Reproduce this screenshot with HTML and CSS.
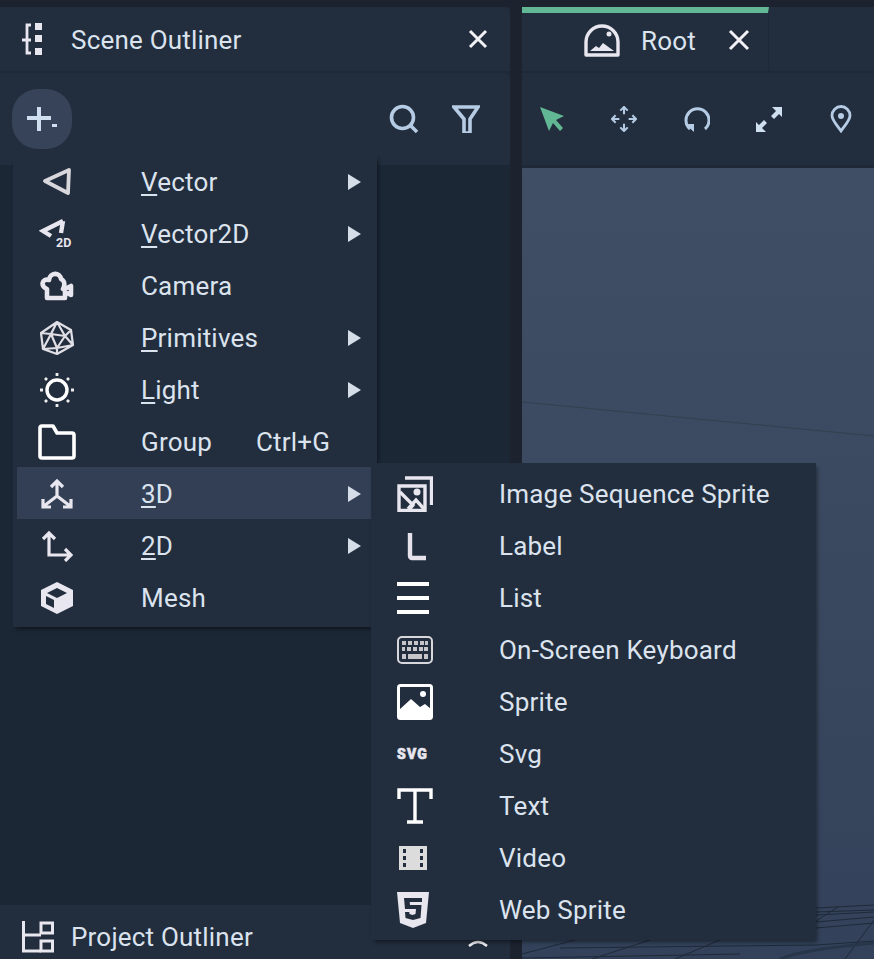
FILE: index.html
```html
<!DOCTYPE html>
<html>

<head>
    <title>Scene Outliner</title>
    <link rel="stylesheet" href="styles.css">
</head>

<body>
    <div class="app">
        <div class="left">
            <div class="tabbar">
                <svg class="tab-icon" width="20" height="32" viewBox="0 0 20 32">
                    <path d="M9 2H5v28h4M0 17h9" fill="none" stroke="#e8e6ee" stroke-width="2.800" />
                    <path d="M13 0h7v7h-7zM13 12h7v7h-7zM13 25h7v7h-7z" fill="#e8e6ee" />
                </svg>
                <span class="tab-title">Scene Outliner</span>
                <svg class="close close-left" width="20" height="20" viewBox="0 0 20 20">
                    <path d="M2 2l16 16M18 2L2 18" stroke="#f2f2f6" stroke-width="3" />
                </svg>
            </div>
            <div class="toolbar">
                <div class="add-btn">
                    <svg width="32" height="26" viewBox="0 0 32 26">
                        <path d="M13 1v24M1 12h24" stroke="#cfdff0" stroke-width="4" />
                        <path d="M26 18h5v3h-5z" fill="#cfdff0" />
                    </svg>
                </div>
                <svg class="tool-search" width="30" height="30" viewBox="0 0 30 30">
                    <circle cx="13.500" cy="13.500" r="11" fill="none" stroke="#b5cce4" stroke-width="3.600" />
                    <path d="M21 21l7 7" stroke="#b5cce4" stroke-width="3.600" />
                </svg>
                <svg class="tool-filter" width="28" height="28" viewBox="0 0 28 28">
                    <path d="M2 2h24L18 14v14h-6V14z" fill="none" stroke="#b5cce4" stroke-width="3.600" />
                </svg>
            </div>
            <div class="tree"></div>
            <div class="project-bar">
                <svg class="tab-icon" width="32" height="32" viewBox="0 0 32 32">
                    <path d="M1.500 0v30H19M1.500 14H19" fill="none" stroke="#e8e6ee" stroke-width="3" />
                    <path d="M19 2h11.500v10H19zM19 20h11.500v10H19z" fill="none" stroke="#e8e6ee" stroke-width="3" />
                </svg>
                <span class="tab-title tab-title-project">Project Outliner</span>
                <svg class="caret" width="20" height="8" viewBox="0 0 20 8">
                    <path d="M1 7q9-8 18 0" fill="none" stroke="#f2f2f6" stroke-width="2.400" />
                </svg>
            </div>
        </div>

        <div class="right">
            <div class="tabbar tabbar-right">
                <div class="root-tab">
                    <svg width="36" height="33" viewBox="0 0 36 33">
                        <path d="M2 31V18a16 16 0 0 1 32 0v13z" fill="none" stroke="#e8e6ee" stroke-width="3.400" stroke-linejoin="round" />
                        <circle cx="25" cy="10" r="2.500" fill="#e8e6ee" />
                        <path d="M6 27l6-5 3 2 4-5 11 8z" fill="#e8e6ee" />
                    </svg>
                    <span class="tab-title">Root</span>
                    <svg width="22" height="22" viewBox="0 0 22 22">
                        <path d="M2 2l18 18M20 2L2 20" stroke="#f2f2f6" stroke-width="3" />
                    </svg>
                </div>
            </div>
            <div class="toolbar toolbar-right">
                <svg width="26" height="26" viewBox="0 0 26 26">
                    <path d="M1 1l24 9-8 4 7 8-3 3-7-8-4 8z" fill="#62b894" />
                </svg>
                <svg width="26" height="26" viewBox="0 0 28 28">
                    <path d="M10 5l4-4 4 4M10 23l4 4 4-4M5 10l-4 4 4 4M23 10l4 4-4 4" fill="none" stroke="#b5cce4" stroke-width="2.200" />
                    <path d="M14 2v7M14 19v7M2 14h7M19 14h7" stroke="#b5cce4" stroke-width="2.200" />
                </svg>
                <svg width="26" height="26" viewBox="0 0 26 26">
                    <path d="M6 23a11.500 11.500 0 1 1 15 0" fill="none" stroke="#b5cce4" stroke-width="3" />
                    <path d="M1 18h9v8z" fill="#b5cce4" />
                </svg>
                <svg width="26" height="26" viewBox="0 0 26 26">
                    <path d="M16 1h10v10l-3-3-5 5-3-3 5-5zM0 16l3 3 5-5 3 3-5 5 4 4H0z" fill="#cfdff0" />
                </svg>
                <svg width="26" height="28" viewBox="-1 0 26 28">
                    <path d="M11 26C6 19 2 15 2 10.500a9 9 0 0 1 18 0c0 4.500-4 8.500-9 15.500z" fill="none" stroke="#b5cce4" stroke-width="2.800" />
                    <circle cx="11" cy="11" r="3" fill="#b5cce4" />
                </svg>
            </div>
            <div class="viewport"></div>
        </div>
    </div>

    <svg class="grid" width="352" height="792" viewBox="522 167 352 792">
        <path d="M522 402L874 436" stroke="#33404f" stroke-width="1" fill="none" />
        <path d="M816 908L874 905M816 912L874 910M816 915L874 912M816 922L874 917M816 928L874 923M816 921L838 907M874 920L845 959M522 954L575 940M592 959L650 940M675 959L720 940M522 958L740 954M560 948L816 945L874 941" stroke="#1f2a39" stroke-width="1" fill="none" />
        <path d="M780 959q20-9 94-16" stroke="#28364a" stroke-width="3" fill="none" />
    </svg>

    <div class="menu main-menu">
        <div class="item">
            <span class="icon"><svg width="28" height="28" viewBox="0 0 28 28">
                    <path d="M26 2L2 13l23 12z" fill="none" stroke="#d8d8dc" stroke-width="3.800" stroke-linejoin="round" />
                </svg></span>
            <span class="label"><u>V</u>ector</span><span class="arrow"></span>
        </div>
        <div class="item">
            <span class="icon"><svg width="36" height="32" viewBox="0 0 36 32">
                    <path d="M24 3L4 13l8 5M24 3l-2 12" fill="none" stroke="#e8e6ee" stroke-width="4.400" />
                    <text x="17" y="29" class="icon-text">2D</text>
                </svg></span>
            <span class="label"><u>V</u>ector2D</span><span class="arrow"></span>
        </div>
        <div class="item">
            <span class="icon"><svg width="34" height="30" viewBox="0 0 34 30">
                    <path d="M7 27V18C0 15 2 7 9 9 10 1 20 1 21 8c4 2 4 6 2 10h2l6-3v9l-6-3v6z" fill="none" stroke="#e8e6ee" stroke-width="4.600" stroke-linejoin="round" />
                </svg></span>
            <span class="label">Camera</span>
        </div>
        <div class="item">
            <span class="icon"><svg width="36" height="36" viewBox="0 0 36 36">
                    <path d="M18 2l14 8 2 15-16 9L4 29 2 13zM18 2l-6 12 14 2-8-14M2 13l10 1 6 14 8-12 6-6M12 14L4 29l14-1 16-3-8-9M18 28v6" fill="none" stroke="#e0dfe6" stroke-width="2.200" stroke-linejoin="round" />
                </svg></span>
            <span class="label"><u>P</u>rimitives</span><span class="arrow"></span>
        </div>
        <div class="item">
            <span class="icon"><svg width="38" height="38" viewBox="0 0 38 38">
                    <circle cx="19" cy="19" r="10" fill="none" stroke="#fff" stroke-width="3.400" />
                    <path d="M19 2v3M19 33v3M2 19h3M33 19h3M7 7l2 2M29 29l2 2M31 7l-2 2M7 31l2-2" stroke="#eee" stroke-width="2.800" />
                </svg></span>
            <span class="label"><u>L</u>ight</span><span class="arrow"></span>
        </div>
        <div class="item">
            <span class="icon"><svg width="38" height="36" viewBox="0 0 38 36">
                    <path d="M2 4a2 2 0 0 1 2-2h11l4 7h15a2 2 0 0 1 2 2v21a2 2 0 0 1-2 2H4a2 2 0 0 1-2-2z" fill="none" stroke="#fff" stroke-width="3.600" stroke-linejoin="round" />
                </svg></span>
            <span class="label label-group">Group</span><span class="shortcut">Ctrl+G</span>
        </div>
        <div class="item active">
            <span class="icon"><svg width="32" height="30" viewBox="0 0 32 30">
                    <path d="M16 2v15L3 27M16 17l13 10M10 8l6-6 6 6M2 20v8h8M30 20v8h-8" fill="none" stroke="#e8e6ee" stroke-width="3.200" />
                </svg></span>
            <span class="label"><u>3</u>D</span><span class="arrow"></span>
        </div>
        <div class="item">
            <span class="icon"><svg width="32" height="32" viewBox="0 0 32 32">
                    <path d="M8 3v22h22M2 9l6-6 6 6M24 19l6 6-6 6" fill="none" stroke="#e8e6ee" stroke-width="3.200" />
                </svg></span>
            <span class="label"><u>2</u>D</span><span class="arrow"></span>
        </div>
        <div class="item">
            <span class="icon"><svg width="32" height="32" viewBox="0 0 32 32">
                    <path d="M16 0L32 8v16L16 32 0 24V8z" fill="#e8e6ee" />
                    <path d="M16 6l10 5-10 5-10-5zM5 14l8 4v8l-8-4z" fill="#222d3d" />
                </svg></span>
            <span class="label">Mesh</span>
        </div>
    </div>

    <div class="menu sub-menu">
        <div class="item">
            <span class="icon"><svg width="36" height="36" viewBox="0 0 36 36">
                    <path d="M8 2h26.500v27" fill="none" stroke="#e8e6ee" stroke-width="3.400" />
                    <path d="M2 10h26v24.500H2z" fill="none" stroke="#e8e6ee" stroke-width="3.400" />
                    <circle cx="20" cy="16" r="3.500" fill="#e8e6ee" />
                    <path d="M3 16l13 13-5 6M11 33l8-9 8 9" fill="none" stroke="#e8e6ee" stroke-width="3.400" />
                </svg></span>
            <span class="label">Image Sequence Sprite</span>
        </div>
        <div class="item">
            <span class="icon"><svg width="32" height="30" viewBox="0 0 32 30">
                    <path d="M13 2v23a2 2 0 0 0 2 2h14" fill="none" stroke="#e6e2ec" stroke-width="4.400" />
                </svg></span>
            <span class="label">Label</span>
        </div>
        <div class="item">
            <span class="icon"><svg width="32" height="32" viewBox="0 0 32 32">
                    <path d="M0 2h32M0 16h32M0 30h32" stroke="#fff" stroke-width="3.800" />
                </svg></span>
            <span class="label">List</span>
        </div>
        <div class="item">
            <span class="icon"><svg width="36" height="28" viewBox="0 0 36 28">
                    <rect x="1" y="1" width="34" height="26" rx="4" fill="none" stroke="#d8d8dc" stroke-width="2" />
                    <path d="M5 5h4v4H5zM11 5h4v4h-4zM17 5h4v4h-4zM23 5h4v4h-4zM28 5h3v4h-3zM5 11h3v4H5zM10 11h4v4h-4zM16 11h4v4h-4zM22 11h4v4h-4zM27 11h4v4h-4zM5 18h4v5H5zM11 18h14v5H11zM27 18h4v5h-4z" fill="#c6c6ca" />
                </svg></span>
            <span class="label">On-Screen Keyboard</span>
        </div>
        <div class="item">
            <span class="icon"><svg width="36" height="36" viewBox="0 0 36 36">
                    <rect x="1.500" y="1.500" width="33" height="33" rx="2" fill="none" stroke="#fff" stroke-width="3" />
                    <path d="M2 26l12-11 9 8 5-3 6 5v9H2z" fill="#fff" />
                    <circle cx="26" cy="10" r="3" fill="#fff" />
                </svg></span>
            <span class="label">Sprite</span>
        </div>
        <div class="item">
            <span class="icon"><span class="svg-mark">SVG</span></span>
            <span class="label">Svg</span>
        </div>
        <div class="item">
            <span class="icon"><svg width="36" height="36" viewBox="0 0 36 36">
                    <path d="M2 11V2h32v9M18 2v33M10 34h16M3 2h30" fill="none" stroke="#fff" stroke-width="3.400" />
                </svg></span>
            <span class="label">Text</span>
        </div>
        <div class="item">
            <span class="icon"><svg width="30" height="24" viewBox="-2 0 30 24">
                    <path d="M0 0h28v24H0z" fill="#dcdcdc" />
                    <path d="M4 3h3v4H4zM4 10h3v4H4zM4 17h3v4H4zM21 3h3v4h-3zM21 10h3v4h-3zM21 17h3v4h-3z" fill="#222d3d" />
                </svg></span>
            <span class="label">Video</span>
        </div>
        <div class="item">
            <span class="icon"><svg width="32" height="36" viewBox="0 0 32 36">
                    <path d="M0 0h32l-3 31-13 5-13-5z" fill="#e8e6ee" />
                    <path d="M25 6H7l1 11h11l-.5 5-3 1-3-1-.2-2H8l.5 6 7.500 2 7.500-2 1-13H13l-.3-3H25z" fill="#222d3d" />
                </svg></span>
            <span class="label">Web Sprite</span>
        </div>
    </div>
</body>

</html>
```

FILE: styles.css
```css
html, body {
  margin: 0;
  padding: 0;
}

body {
  width: 874px;
  height: 959px;
  overflow: hidden;
  background-color: #1c232f;
  font-family: Roboto, "Liberation Sans", sans-serif;
  color: #dbe3ee;
}

.app {
  display: flex;
  gap: 12px;
  height: 959px;
  padding-top: 7px;
  box-sizing: border-box;
}

.left {
  width: 510px;
  display: flex;
  flex-direction: column;
  background-color: #1e2836;
}

.right {
  flex: 1;
  display: flex;
  flex-direction: column;
  background-color: #1e2836;
}

.tabbar {
  height: 64px;
  display: flex;
  align-items: center;
  background-color: #222d3d;
  padding-left: 22px;
  border-top-right-radius: 5px;
}

.tabbar-right {
  padding-left: 0;
  border-radius: 0;
}

.tab-icon {
  flex: none;
}

.tab-title {
  font-size: 26px;
  letter-spacing: 0.2px;
  margin-left: 29px;
  margin-top: 2px;
}

.close-left {
  margin-left: auto;
  margin-right: 22px;
}

.toolbar {
  height: 92px;
  margin-top: 2px;
  display: flex;
  align-items: center;
  background-color: #222d3d;
  padding-left: 12px;
  border-top-right-radius: 5px;
}

.add-btn {
  width: 60px;
  height: 60px;
  border-radius: 26px;
  background-color: #364358;
  display: flex;
  align-items: center;
  justify-content: center;
}

.tool-search {
  margin-left: auto;
}

.tool-filter {
  margin-left: 33px;
  margin-right: 30px;
}

.tree {
  flex: 1;
  background-color: #1b2735;
}

.project-bar {
  height: 54px;
  box-sizing: border-box;
  padding-top: 10px;
  display: flex;
  align-items: center;
  background-color: #222d3d;
  padding-left: 22px;
}

.tab-title-project {
  margin-left: 17px;
  margin-top: 0;
}

.caret {
  margin-left: auto;
  margin-right: 22px;
  margin-top: 12px;
}

.root-tab {
  width: 247px;
  height: 64px;
  box-sizing: border-box;
  border-top: 6px solid #62b894;
  border-right: 1px solid #1e2836;
  padding-bottom: 4px;
  padding-left: 62px;
  display: flex;
  align-items: center;
}

.root-tab .tab-title {
  margin-left: 21px;
  margin-right: 32px;
}

.toolbar-right {
  padding-left: 17px;
  gap: 46.400px;
  border-radius: 0;
}

.viewport {
  flex: 1;
  margin-top: 3px;
  background-image: linear-gradient(#3f4e65, #3c4b61 30%, #33425a);
}

.grid {
  position: absolute;
  left: 522px;
  top: 167px;
}

.menu {
  position: absolute;
  background-color: #222d3d;
  box-shadow: 2px 3px 4px -1px rgba(0, 0, 0, 0.45);
}

.main-menu {
  left: 13px;
  top: 155px;
  width: 360px;
  height: 472px;
  padding-left: 4px;
}

.sub-menu {
  left: 371px;
  top: 463px;
  width: 445px;
  height: 477px;
  padding-top: 5px;
  box-sizing: border-box;
}

.item {
  height: 52px;
  box-sizing: border-box;
  padding-top: 2px;
  display: flex;
  align-items: center;
  position: relative;
  font-size: 26px;
  letter-spacing: 0.2px;
}

.sub-menu .item {
  padding-top: 0;
}

.item.active {
  background-color: #323f55;
}

.item u {
  text-underline-offset: 3px;
}

.icon {
  width: 80px;
  display: flex;
  justify-content: center;
  align-items: center;
  flex: none;
}

.main-menu .label {
  margin-left: 44px;
}

.sub-menu .icon {
  width: 88px;
  box-sizing: border-box;
  padding-left: 26px;
  justify-content: flex-start;
}

.sub-menu .label {
  margin-left: 40px;
}

.label-group {
  width: 115px;
}

.arrow {
  position: absolute;
  right: 16px;
  top: 19px;
  width: 0;
  height: 0;
  border-left: 13px solid #d5dde8;
  border-top: 8px solid transparent;
  border-bottom: 8px solid transparent;
}

.icon-text {
  font-size: 12.500px;
  font-weight: 700;
  letter-spacing: 0;
  fill: #e8e6ee;
}

.svg-mark {
  font-size: 14px;
  font-weight: 900;
  letter-spacing: 1.200px;
  -webkit-text-stroke: 0.6px #e8e6ee;
  color: #e8e6ee;
}
```
